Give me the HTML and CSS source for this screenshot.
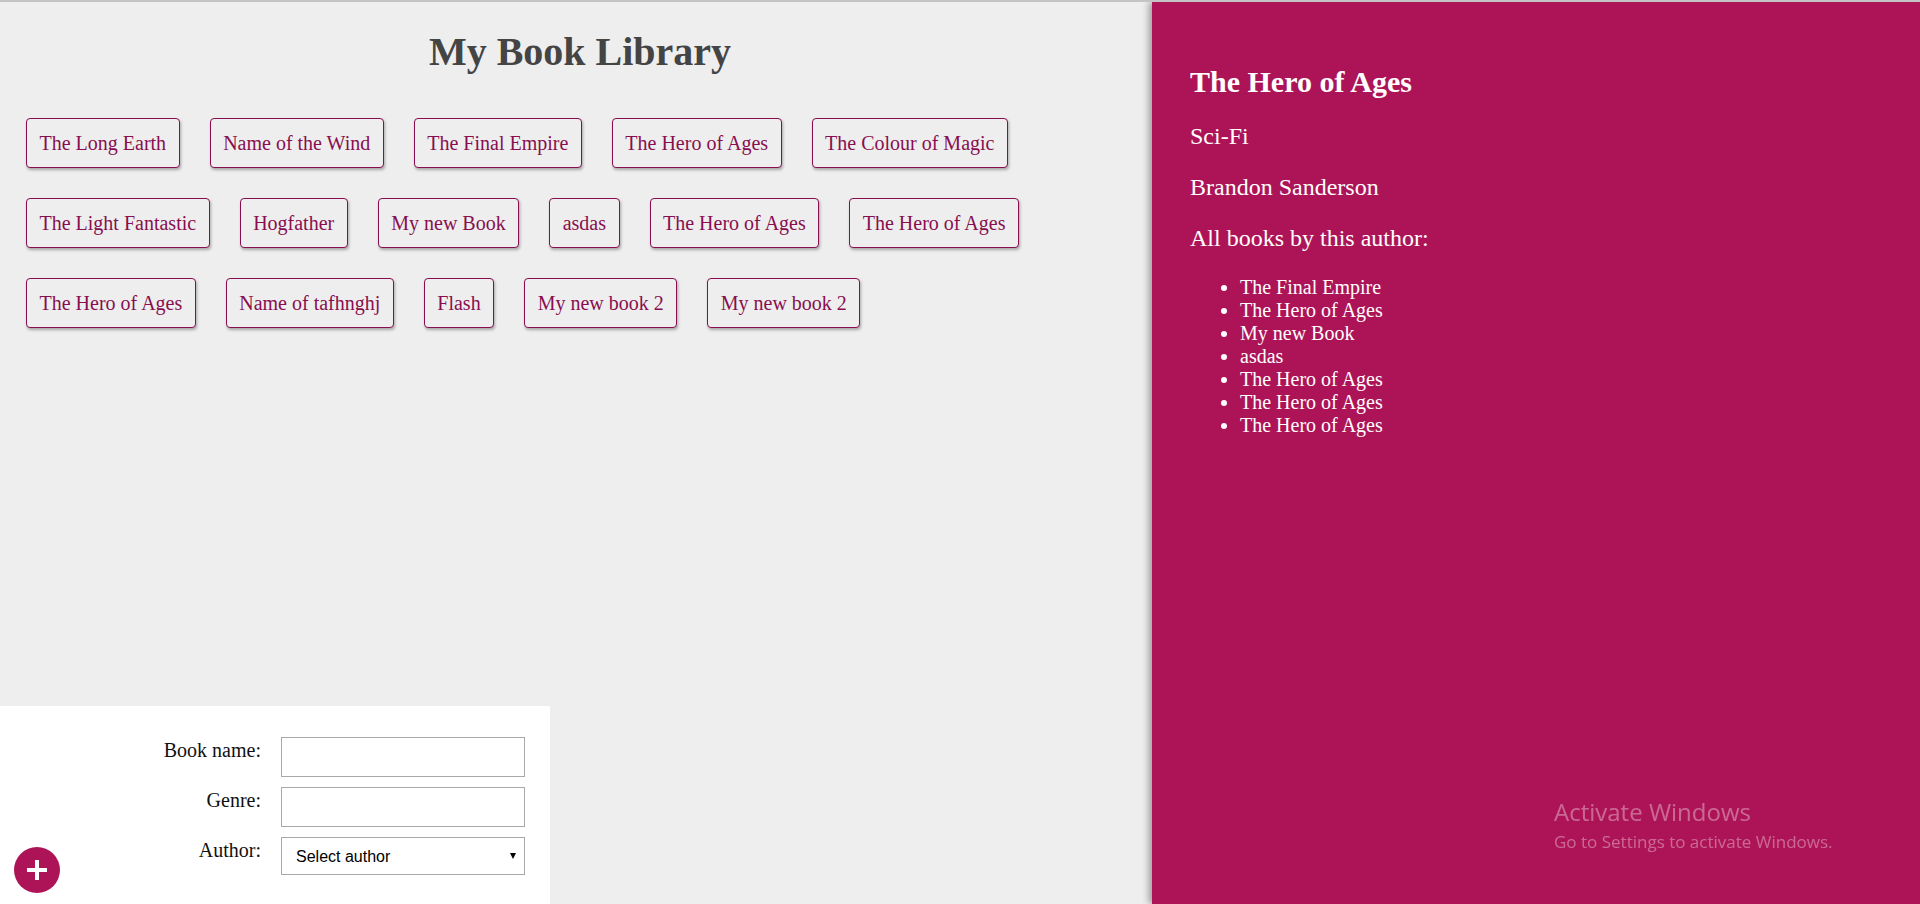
FILE: index.html
```html
<!DOCTYPE html>
<html lang="en">
<head>
<meta charset="utf-8">
<title>My Book Library</title>
<link rel="stylesheet" href="styles.css">
</head>
<body>
<div class="app">
  <main class="library">
    <h1 class="title">My Book Library</h1>
    <ul class="book-list">
      <li><button class="book">The Long Earth</button></li>
      <li><button class="book">Name of the Wind</button></li>
      <li><button class="book">The Final Empire</button></li>
      <li><button class="book">The Hero of Ages</button></li>
      <li><button class="book">The Colour of Magic</button></li>
      <li><button class="book">The Light Fantastic</button></li>
      <li><button class="book">Hogfather</button></li>
      <li><button class="book">My new Book</button></li>
      <li><button class="book">asdas</button></li>
      <li><button class="book">The Hero of Ages</button></li>
      <li><button class="book">The Hero of Ages</button></li>
      <li><button class="book">The Hero of Ages</button></li>
      <li><button class="book">Name of tafhnghj</button></li>
      <li><button class="book">Flash</button></li>
      <li><button class="book">My new book 2</button></li>
      <li><button class="book">My new book 2</button></li>
    </ul>
    <form class="add-form">
      <label class="form-label" for="book-name">Book name:</label>
      <input class="form-field" id="book-name" type="text">
      <label class="form-label" for="genre">Genre:</label>
      <input class="form-field" id="genre" type="text">
      <label class="form-label" for="author">Author:</label>
      <div class="select-wrap">
        <select class="form-select" id="author">
          <option>Select author</option>
        </select>
      </div>
    </form>
    <button class="add-btn" type="button" aria-label="Add book">
      <svg width="20" height="20" viewBox="0 0 20 20"><rect x="0" y="8" width="20" height="4" fill="#fff"/><rect x="8" y="0" width="4" height="20" fill="#fff"/></svg>
    </button>
  </main>
  <aside class="details">
    <h2 class="details-title">The Hero of Ages</h2>
    <p class="details-text">Sci-Fi</p>
    <p class="details-text">Brandon Sanderson</p>
    <p class="details-text">All books by this author:</p>
    <ul class="author-books">
      <li>The Final Empire</li>
      <li>The Hero of Ages</li>
      <li>My new Book</li>
      <li>asdas</li>
      <li>The Hero of Ages</li>
      <li>The Hero of Ages</li>
      <li>The Hero of Ages</li>
    </ul>
  </aside>
</div>
<div class="watermark">
  <div class="wm-title">Activate Windows</div>
  <div class="wm-sub">Go to Settings to activate Windows.</div>
</div>
</body>
</html>
```
FILE: styles.css
```css
html, body {
  margin: 0;
  height: 100%;
}

body {
  font-family: "Liberation Serif", "Times New Roman", serif;
  background: #eeeeee;
  border-top: 2px solid #c4c4c4;
  box-sizing: border-box;
  overflow: hidden;
}

.app {
  display: flex;
  height: 902px;
}

.library {
  position: relative;
  flex: 0 0 1152px;
  display: flex;
  flex-direction: column;
}

.title {
  font-size: 40px;
  line-height: 46px;
  font-weight: bold;
  color: #444444;
  text-align: center;
  margin: 27px 0;
  padding-left: 8px;
}

.book-list {
  list-style: none;
  margin: 0;
  padding: 1px 11px 0;
  display: flex;
  flex-wrap: wrap;
}

.book {
  margin: 15px;
  padding: 12px 12.5px;
  border: 1px solid #880e4f;
  border-radius: 4px;
  background: #eeeeee;
  color: #880e4f;
  font-family: "Liberation Serif", "Times New Roman", serif;
  font-size: 20px;
  line-height: 24px;
  box-shadow: 1px 2px 3px rgba(0, 0, 0, 0.3);
  cursor: pointer;
}

.add-form {
  margin-top: auto;
  width: 550px;
  box-sizing: border-box;
  background: #ffffff;
  padding: 31px 25px 29px 0;
  display: grid;
  grid-template-columns: 261px 244px;
  column-gap: 20px;
  row-gap: 10px;
}

.form-label {
  font-size: 20px;
  line-height: 23px;
  text-align: right;
  padding-top: 2px;
  color: #111111;
}

.form-field {
  height: 40px;
  margin: 0;
  box-sizing: border-box;
  border: 1px solid #a9a9a9;
  border-radius: 0;
  background: #ffffff;
  padding: 0 8px;
  font: 16px "Liberation Sans", Arial, sans-serif;
}

.select-wrap {
  position: relative;
}

.form-select {
  display: block;
  width: 100%;
  height: 38px;
  margin: 0;
  box-sizing: border-box;
  -webkit-appearance: none;
  appearance: none;
  border: 1px solid #a9a9a9;
  border-radius: 0;
  background: #ffffff;
  padding: 0 30px 0 14px;
  font: 16px "Liberation Sans", Arial, sans-serif;
  color: #000000;
}

.select-wrap::after {
  content: "";
  position: absolute;
  right: 9px;
  top: 16px;
  border-left: 3.5px solid transparent;
  border-right: 3.5px solid transparent;
  border-top: 6px solid #000000;
  pointer-events: none;
}

.add-btn {
  position: absolute;
  left: 14px;
  bottom: 11px;
  width: 46px;
  height: 46px;
  border: 0;
  padding: 0;
  border-radius: 50%;
  background: #ad1457;
  display: flex;
  align-items: center;
  justify-content: center;
  cursor: pointer;
}

.details {
  flex: 1;
  background: #ad1457;
  color: #ffffff;
  padding: 38px;
  box-shadow: -3px 0 7px rgba(0, 0, 0, 0.35);
  position: relative;
}

.details-title {
  font-size: 30px;
  line-height: 34px;
  font-weight: bold;
  margin: 25px 0 23px;
}

.details-text {
  font-size: 24px;
  line-height: 28px;
  margin: 0 0 23px;
}

.author-books {
  margin: 24px 0 0;
  padding-left: 50px;
  font-size: 20px;
  line-height: 23px;
}

.watermark {
  position: fixed;
  left: 1554px;
  top: 798px;
  color: rgba(255, 255, 255, 0.36);
  font-family: "Open Sans", "Noto Sans", sans-serif;
  pointer-events: none;
}

.wm-title {
  font-size: 24px;
  line-height: 28px;
}

.wm-sub {
  font-size: 17px;
  line-height: 22px;
  margin-top: 5px;
}
```
